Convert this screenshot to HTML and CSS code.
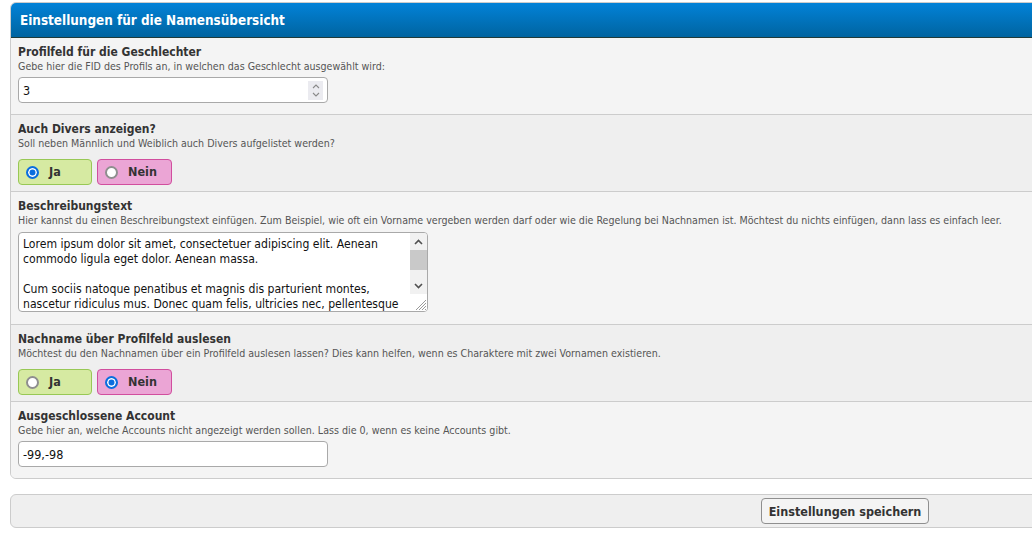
FILE: index.html
```html
<!DOCTYPE html>
<html lang="de">
<head>
<meta charset="utf-8">
<title>Einstellungen für die Namensübersicht</title>
<link rel="stylesheet" href="styles.css">
</head>
<body>
<div class="page">
  <form class="settings">
    <div class="panel">
      <div class="panel-head">Einstellungen für die Namensübersicht</div>

      <div class="row odd">
        <label class="label">Profilfeld für die Geschlechter</label>
        <div class="desc">Gebe hier die FID des Profils an, in welchen das Geschlecht ausgewählt wird:</div>
        <div class="field">
          <div class="text-input">
            <span>3</span>
            <span class="spinner">
              <svg width="12" height="19" viewBox="0 0 12 19"><path d="M3 7 L6 4 L9 7" fill="none" stroke="#8a8a8a" stroke-width="1.1"/><path d="M3 12 L6 15 L9 12" fill="none" stroke="#8a8a8a" stroke-width="1.1"/></svg>
            </span>
          </div>
        </div>
      </div>

      <div class="row even">
        <label class="label">Auch Divers anzeigen?</label>
        <div class="desc">Soll neben Männlich und Weiblich auch Divers aufgelistet werden?</div>
        <div class="radios">
          <div class="choice yes"><span class="radio checked"></span><span class="choice-text">Ja</span></div>
          <div class="choice no"><span class="radio"></span><span class="choice-text">Nein</span></div>
        </div>
      </div>

      <div class="row odd">
        <label class="label">Beschreibungstext</label>
        <div class="desc">Hier kannst du einen Beschreibungstext einfügen. Zum Beispiel, wie oft ein Vorname vergeben werden darf oder wie die Regelung bei Nachnamen ist. Möchtest du nichts einfügen, dann lass es einfach leer.</div>
        <div class="textarea">
          <div class="ta-text">Lorem ipsum dolor sit amet, consectetuer adipiscing elit. Aenean commodo ligula eget dolor. Aenean massa.<br><br>Cum sociis natoque penatibus et magnis dis parturient montes, nascetur ridiculus mus. Donec quam felis, ultricies nec, pellentesque eu, pretium quis, sem. Nulla consequat massa quis enim. Donec pede justo.</div>
          <div class="ta-scroll">
            <span class="sb-btn"><svg width="9" height="6" viewBox="0 0 9 6"><path d="M1 5 L4.5 1.5 L8 5" fill="none" stroke="#505050" stroke-width="1.6"/></svg></span>
            <span class="sb-thumb"></span>
            <span class="sb-track"></span>
            <span class="sb-btn"><svg width="9" height="6" viewBox="0 0 9 6"><path d="M1 1 L4.5 4.5 L8 1" fill="none" stroke="#505050" stroke-width="1.6"/></svg></span>
            <span class="sb-corner"><svg width="14" height="14" viewBox="0 0 14 14"><path d="M13 3 L3 13 M13 6 L6 13 M13 9 L9 13 M13 12 L12 13" stroke="#9a9a9a" stroke-width="1"/></svg></span>
          </div>
        </div>
      </div>

      <div class="row even">
        <label class="label">Nachname über Profilfeld auslesen</label>
        <div class="desc">Möchtest du den Nachnamen über ein Profilfeld auslesen lassen? Dies kann helfen, wenn es Charaktere mit zwei Vornamen existieren.</div>
        <div class="radios">
          <div class="choice yes"><span class="radio"></span><span class="choice-text">Ja</span></div>
          <div class="choice no"><span class="radio checked"></span><span class="choice-text">Nein</span></div>
        </div>
      </div>

      <div class="row odd last">
        <label class="label">Ausgeschlossene Account</label>
        <div class="desc">Gebe hier an, welche Accounts nicht angezeigt werden sollen. Lass die 0, wenn es keine Accounts gibt.</div>
        <div class="field">
          <div class="text-input"><span>-99,-98</span></div>
        </div>
      </div>
    </div>

    <div class="buttons">
      <button type="button" class="submit">Einstellungen speichern</button>
    </div>
  </form>
</div>
</body>
</html>
```

FILE: styles.css
```css
html, body {
  margin: 0;
  padding: 0;
  background: #ffffff;
  overflow: hidden;
}

body {
  font-family: Tahoma, "DejaVu Sans Condensed", "Liberation Sans", sans-serif;
  color: #333333;
}

.page {
  padding: 2px 0 0 10px;
}

.settings {
  width: 1670px;
}

.panel {
  border: 1px solid #cccccc;
  border-radius: 6px;
  overflow: hidden;
  background: #f5f5f5;
}

.panel-head {
  height: 32px;
  line-height: 32px;
  padding: 2px 0 0 9px;
  background: linear-gradient(to bottom, #0282d8 0%, #0064a0 100%);
  border-bottom: 1px solid #1f3b3a;
  color: #ffffff;
  font-weight: bold;
  font-size: 13.4px;
}

.row {
  padding: 6px 7px 0 7px;
  border-bottom: 1px solid #cccccc;
}

.row.odd { background: #f4f4f4; }
.row.even { background: #efefef; }
.row.last { border-bottom: none; }

.label {
  display: block;
  font-weight: bold;
  font-size: 12px;
  line-height: 16px;
  color: #333333;
}

.desc {
  font-size: 10.6px;
  line-height: 13px;
  color: #555555;
  white-space: nowrap;
}

.field {
  padding: 4px 0 11px 0;
}

.text-input {
  box-sizing: border-box;
  width: 310px;
  height: 26px;
  border: 1px solid #a9a9a9;
  border-radius: 4px;
  background: #ffffff;
  display: flex;
  align-items: center;
  justify-content: space-between;
  padding: 0 3px 0 4px;
  font-size: 12.5px;
  color: #111111;
}

.spinner {
  display: flex;
  width: 15px;
  height: 19px;
  background: #ebebf0;
  align-items: center;
  justify-content: center;
  margin-right: 1px;
}

.radios {
  display: flex;
  gap: 5px;
  padding: 9px 0 6px 0;
}

.choice {
  box-sizing: border-box;
  width: 74px;
  height: 26px;
  border-radius: 4px;
  display: flex;
  align-items: center;
  padding-left: 7px;
  font-weight: bold;
  font-size: 12.5px;
  color: #333333;
}

.choice.yes {
  background: #d6eaa2;
  border: 1px solid #98c855;
}

.choice.no {
  width: 75px;
  background: #eba5d5;
  border: 1px solid #d14e9e;
}

.radio {
  box-sizing: border-box;
  width: 13px;
  height: 13px;
  border-radius: 50%;
  border: 2px solid #8f8f8f;
  background: #ffffff;
  margin-right: 10px;
}

.radio.checked {
  border: 2px solid #0b6ede;
  box-shadow: inset 0 0 0 1.5px #ffffff;
  background: #0b6ede;
}

.choice-text {
  line-height: 16px;
}

.textarea {
  box-sizing: border-box;
  width: 410px;
  height: 80px;
  margin: 5px 0 12px 0;
  border: 1px solid #a9a9a9;
  border-radius: 4px;
  background: #ffffff;
  display: flex;
  overflow: hidden;
}

.ta-text {
  flex: 1;
  padding: 4px 4px 0 4px;
  font-size: 12.1px;
  line-height: 15px;
  color: #111111;
  overflow: hidden;
}

.ta-scroll {
  width: 17px;
  display: flex;
  flex-direction: column;
  background: #f1f1f1;
}

.sb-btn {
  height: 17px;
  display: flex;
  align-items: center;
  justify-content: center;
}

.sb-thumb {
  height: 20px;
  background: #c9c9c9;
}

.sb-track {
  height: 7px;
}

.sb-corner {
  height: 17px;
  background: #ffffff;
  display: flex;
  align-items: flex-end;
  justify-content: flex-end;
}

.buttons {
  margin-top: 15px;
  height: 32px;
  border: 1px solid #cccccc;
  border-radius: 6px;
  background: #efefef;
  display: flex;
  align-items: center;
  justify-content: center;
}

.submit {
  font-family: Tahoma, "DejaVu Sans Condensed", "Liberation Sans", sans-serif;
  font-weight: bold;
  font-size: 12.5px;
  color: #333333;
  height: 26px;
  padding: 0 7px;
  background: #f4f4f4;
  border: 1px solid #8f8f8f;
  border-radius: 4px;
}
```
